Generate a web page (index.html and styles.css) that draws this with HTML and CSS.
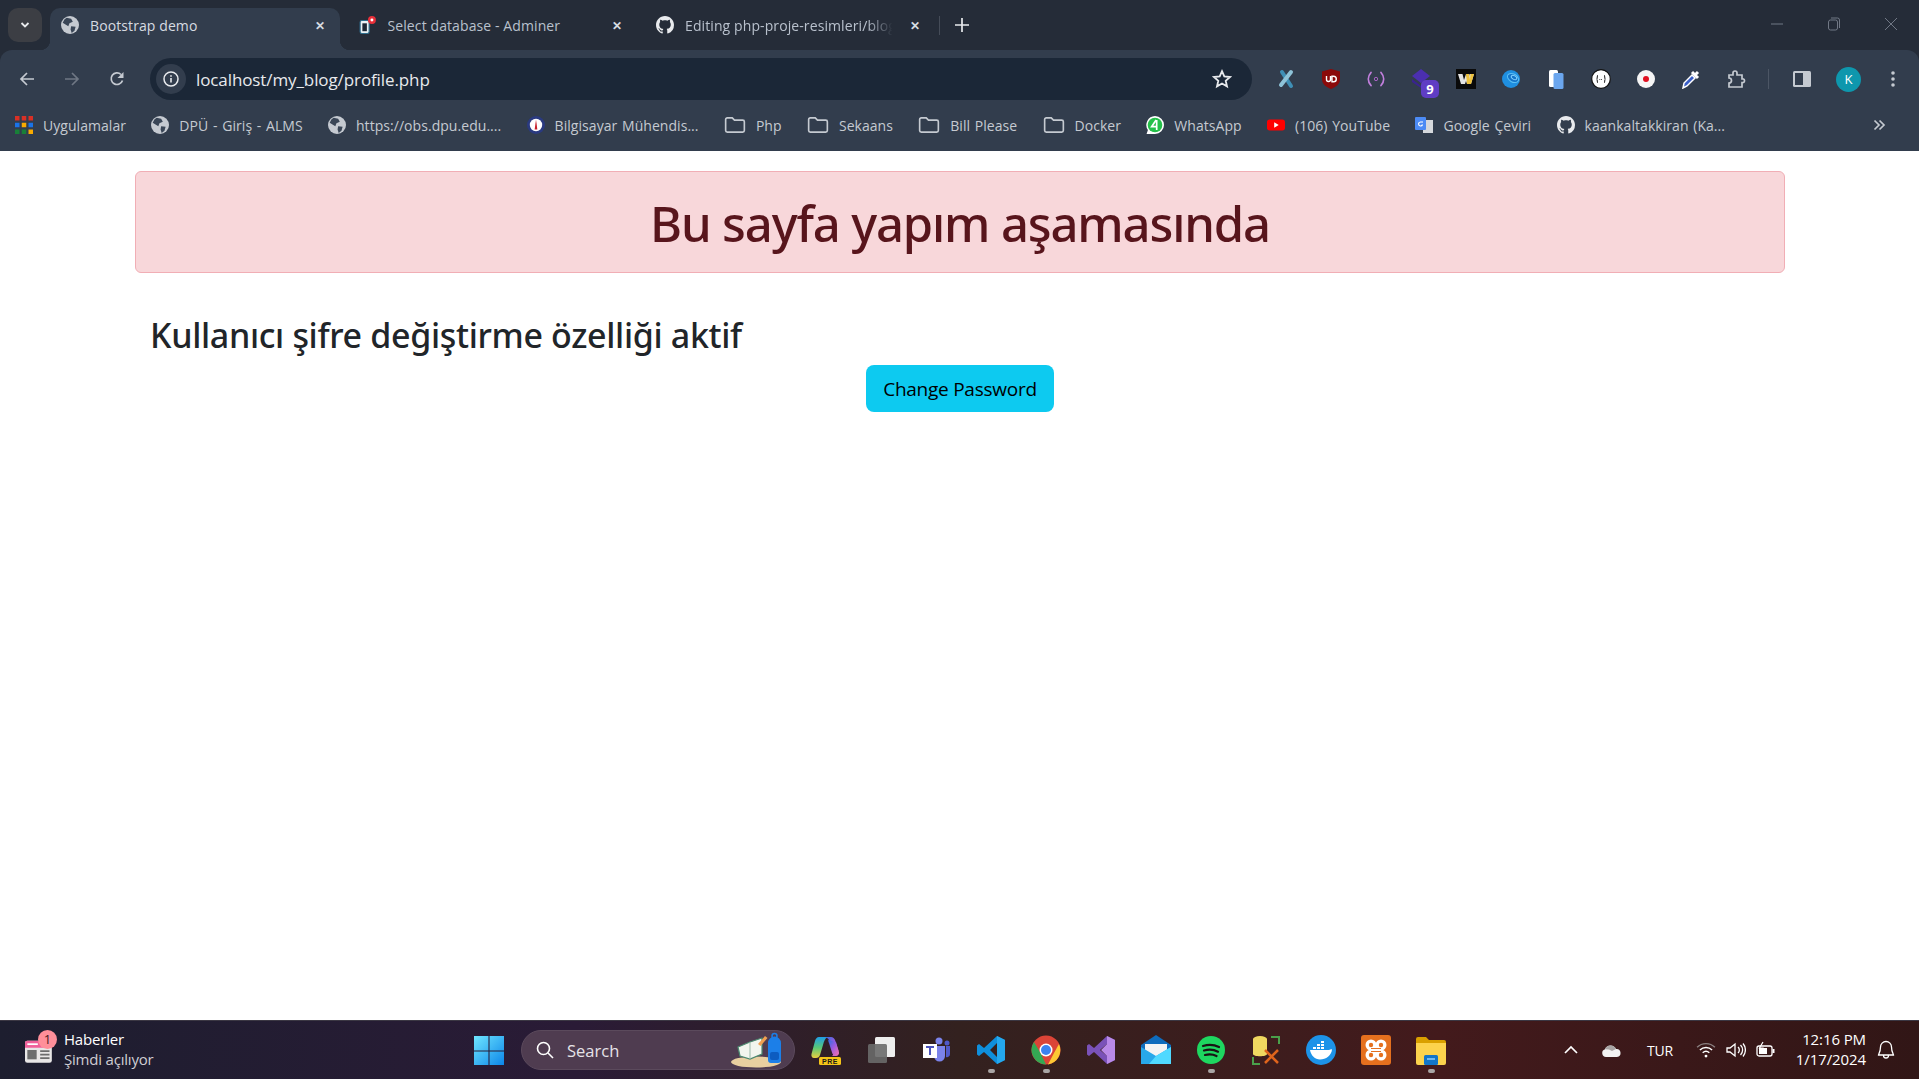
FILE: index.html
```html
<!DOCTYPE html>
<html lang="tr">
<head>
    <meta charset="UTF-8">
    <meta name="viewport" content="width=device-width, initial-scale=1.0">
    <title>Bootstrap demo</title>
    <link rel="stylesheet" href="styles.css">
</head>
<body>

    <svg class="defs">
        <defs>
            <symbol id="globe" viewBox="0 0 16 16">
                <circle cx="8" cy="8" r="8" fill="#c5cad1"/>
                <path d="M5 1.5 9 2.5 10.5 5 7.5 6.5 6.5 9 4 7.5 1.5 6 3 3zM9 9l4 .5L12 13l-2.5 2L8.5 12z" fill="#3a4657"/>
            </symbol>
            <symbol id="folder" viewBox="0 0 20 16">
                <path d="M1.5 3A1.500 1.500 0 0 1 3 1.500h4.500l2 2H17A1.500 1.500 0 0 1 18.500 5v8a1.500 1.500 0 0 1-1.500 1.500H3A1.500 1.500 0 0 1 1.500 13z" fill="none" stroke="#c5cad1" stroke-width="1.500"/>
            </symbol>
            <symbol id="github" viewBox="0 0 16 16">
                <path fill="#e8eaed" d="M8 0C3.580 0 0 3.580 0 8c0 3.540 2.290 6.530 5.470 7.590.4.070.55-.17.55-.38 0-.19-.01-.82-.01-1.490-2.010.37-2.530-.49-2.690-.94-.09-.23-.48-.94-.82-1.130-.28-.15-.68-.52-.01-.53.63-.01 1.080.58 1.230.82.720 1.210 1.870.870 2.330.660.070-.520.280-.870.510-1.070-1.780-.2-3.640-.89-3.640-3.950 0-.870.310-1.590.820-2.150-.080-.2-.360-1.020.080-2.120 0 0 .670-.210 2.200.820.640-.180 1.320-.270 2-.270s1.360.090 2 .270c1.530-1.040 2.200-.820 2.200-.820.440 1.100.160 1.920.080 2.120.510.560.820 1.270.820 2.150 0 3.070-1.870 3.750-3.650 3.950.290.250.540.730.540 1.480 0 1.070-.010 1.930-.010 2.200 0 .210.150.460.550.380A8 8 0 0 0 16 8c0-4.420-3.580-8-8-8z"/>
            </symbol>
        </defs>
    </svg>

    <div class="browser">
        <div class="tabstrip">
            <button class="tab-search">
                <svg width="12" height="12" viewBox="0 0 12 12"><path d="M2.500 4 6 7.500 9.500 4" fill="none" stroke="#e8eaed" stroke-width="1.800"/></svg>
            </button>
            <div class="tab active">
                <svg class="tab-icon"><use href="#globe"/></svg>
                <span class="tab-title">Bootstrap demo</span>
                <span class="tab-close">&#10005;</span>
            </div>
            <div class="tab">
                <svg class="tab-icon" viewBox="0 0 16 16">
                    <rect x="1" y="4" width="8" height="11.500" rx="1.500" fill="#eaf2f5" stroke="#2f6f8f"/>
                    <rect x="3" y="6.500" width="4" height="7" fill="#1d2736"/>
                    <circle cx="11.500" cy="3.500" r="3.500" fill="#e8303a"/>
                    <circle cx="11.500" cy="3.500" r="1.300" fill="#fff"/>
                </svg>
                <span class="tab-title">Select database - Adminer</span>
                <span class="tab-close">&#10005;</span>
            </div>
            <div class="tab last">
                <svg class="tab-icon"><use href="#github"/></svg>
                <span class="tab-title faded">Editing php-proje-resimleri/blog</span>
                <span class="tab-close">&#10005;</span>
            </div>
            <div class="tab-sep"></div>
            <svg class="new-tab" viewBox="0 0 14 14"><path d="M7 0v14M0 7h14" stroke="#e8eaed" stroke-width="1.700"/></svg>
            <div class="window-btns">
                <svg viewBox="0 0 14 14"><path d="M1 7h12" stroke="#717885"/></svg>
                <svg viewBox="0 0 14 14"><rect x="1.500" y="3" width="9" height="10" rx="2" fill="none" stroke="#717885"/><path d="M4 1h6.500a2 2 0 0 1 2 2v8" fill="none" stroke="#717885"/></svg>
                <svg viewBox="0 0 14 14"><path d="M1 1l12 12M13 1 1 13" stroke="#717885"/></svg>
            </div>
        </div>

        <div class="toolbar">
            <div class="nav-btns">
                <svg viewBox="0 0 16 16"><path d="M15 8H2M8 2 2 8l6 6" fill="none" stroke="#c5cad1" stroke-width="1.700"/></svg>
                <svg viewBox="0 0 16 16"><path d="M1 8h13M8 2l6 6-6 6" fill="none" stroke="#6f7784" stroke-width="1.700"/></svg>
                <svg viewBox="0 0 16 16"><path d="M13.500 9.500A5.800 5.800 0 1 1 12 3.500" fill="none" stroke="#c5cad1" stroke-width="1.700"/><path d="M14.500 1v6h-6z" fill="#c5cad1"/></svg>
            </div>
            <div class="omnibox">
                <span class="site-info">
                    <svg viewBox="0 0 16 16"><circle cx="8" cy="8" r="7" fill="none" stroke="#e8eaed" stroke-width="1.500"/><path d="M8 7v4.500M8 4.200v1.600" stroke="#e8eaed" stroke-width="1.600"/></svg>
                </span>
                <span class="url">localhost/my_blog/profile.php</span>
                <svg class="star" viewBox="0 0 20 20"><path d="M10 2.200l2.300 5.200 5.700.6-4.300 3.800 1.300 5.600L10 14.500l-5 2.900 1.300-5.600L2 8l5.700-.6z" fill="none" stroke="#e8eaed" stroke-width="1.800"/></svg>
            </div>
            <div class="extensions">
                <svg viewBox="0 0 20 20"><path d="M6 3 15 17" stroke="#3f8fb5" stroke-width="4" stroke-linecap="round"/><path d="M15 3 5 16" stroke="#8ec3d8" stroke-width="4" stroke-linecap="round"/></svg>
                <svg viewBox="0 0 20 20"><path d="M10 0l9 2.500V10c0 5-4 8-9 10C5 18 1 15 1 10V2.500z" fill="#8b0a0a"/><path d="M5.500 7v3.500a2 2 0 0 0 4 0V7M11 7.200v5.600h1.500a2.800 2.800 0 0 0 0-5.600z" fill="none" stroke="#fff" stroke-width="1.400"/></svg>
                <svg viewBox="0 0 20 20"><circle cx="10" cy="10" r="1.700" fill="none" stroke="#a863c4"/><path d="M5 3.500c-3.500 4-3.500 9 0 13M15 3.500c3.500 4 3.500 9 0 13" fill="none" stroke="#c27fdd" stroke-width="1.800" stroke-linecap="round"/></svg>
                <span class="ext-badge-wrap">
                    <svg viewBox="0 0 20 20"><path d="M10 0l9 7-9 7-9-7z" fill="#4b2fb0"/><path d="M1 10l9 7 9-7v3l-9 6-9-6z" fill="#3a2390"/></svg>
                    <span class="ext-badge">9</span>
                </span>
                <svg viewBox="0 0 20 20"><rect width="20" height="20" fill="#0a0a0a"/><path d="M2 5h4.500l1.500 6 2-6 2 6 1.500-6H18l-3 10h-4l-1-3-1 3H5z" fill="#e4e4e4"/><path d="M10 5h3l1 6 .5-6H18l-3 10h-4z" fill="#eec23c"/></svg>
                <svg viewBox="0 0 20 20"><circle cx="10" cy="10" r="9" fill="#1f8fe0"/><ellipse cx="12" cy="9" rx="6" ry="4" fill="#1474c8" stroke="#5cc0f5" transform="rotate(30 12 9)"/><ellipse cx="13" cy="8.500" rx="3" ry="1.800" fill="none" stroke="#7fd0ff" transform="rotate(30 13 8.500)"/></svg>
                <svg viewBox="0 0 20 20"><rect x="3" y="1" width="9" height="17" rx="1.500" fill="#fff"/><rect x="7.500" y="4" width="10" height="16" rx="1.500" fill="#6ba6ee"/></svg>
                <svg viewBox="0 0 20 20"><circle cx="10" cy="10" r="9.300" fill="#fff" stroke="#111" stroke-width="1.200"/><path d="M7 6.500c-1.500 0 0 3.500-1.500 3.500C7 10 5.500 13.500 7 13.500M13 6.500c1.500 0 0 3.500 1.500 3.500-1.500 0 0 3.500-1.500 3.500" fill="none" stroke="#222" stroke-width="1.100"/><path d="M8.300 10.500h3.400" stroke="#555" stroke-dasharray="1 .7"/></svg>
                <svg viewBox="0 0 20 20"><circle cx="10" cy="10" r="9" fill="#f5f5f5"/><circle cx="10" cy="10" r="3" fill="#e01020"/></svg>
                <svg viewBox="0 0 20 20"><path d="M2 19l1-5L11 6l3 3-8 8z" fill="#3a5fc8" stroke="#fff" stroke-width="1.500"/><path d="M11 3l6 6M13 7l4-4" stroke="#fff" stroke-width="3"/></svg>
                <svg viewBox="0 0 20 20"><path d="M3 6h4V4a2 2 0 0 1 4 0v2h5v4h1.500a2 2 0 0 1 0 3.500H16V18H3v-4a2.500 2.500 0 0 0 0-5z" fill="none" stroke="#c5cad1" stroke-width="1.700"/></svg>
                <span class="toolbar-sep"></span>
                <svg class="side-panel" viewBox="0 0 20 20"><rect x="1" y="2" width="18" height="16" rx="1.500" fill="#c5cad1"/><rect x="3" y="4" width="8" height="12" fill="#323d4d"/></svg>
                <span class="avatar">K</span>
                <svg viewBox="0 0 20 20"><circle cx="10" cy="4" r="1.800" fill="#c5cad1"/><circle cx="10" cy="10" r="1.800" fill="#c5cad1"/><circle cx="10" cy="16" r="1.800" fill="#c5cad1"/></svg>
            </div>
        </div>

        <div class="bookmarks">
            <a class="bm">
                <svg viewBox="0 0 16 16">
                    <path d="M0 0h4v4H0z" fill="#d93025"/><path d="M6 0h4v4H6z" fill="#d93025"/><path d="M12 0h4v4h-4z" fill="#d93025"/>
                    <path d="M0 6h4v4H0z" fill="#1a73e8"/><path d="M6 6h4v4H6z" fill="#f9ab00"/><path d="M12 6h4v4h-4z" fill="#1a73e8"/>
                    <path d="M0 12h4v4H0z" fill="#188038"/><path d="M6 12h4v4H6z" fill="#188038"/><path d="M12 12h4v4h-4z" fill="#f9ab00"/>
                </svg>Uygulamalar</a>
            <a class="bm"><svg viewBox="0 0 16 16"><use href="#globe"/></svg>DPÜ - Giriş - ALMS</a>
            <a class="bm"><svg viewBox="0 0 16 16"><use href="#globe"/></svg>https://obs.dpu.edu....</a>
            <a class="bm">
                <svg viewBox="0 0 16 16"><circle cx="8" cy="8" r="8" fill="#2a3a80"/><circle cx="8" cy="8" r="5.500" fill="#fff"/><path d="M8 3 9.200 12H6.800z" fill="#c8202a"/></svg>Bilgisayar Mühendis...</a>
            <a class="bm"><svg class="folder" viewBox="0 0 20 16"><use href="#folder"/></svg>Php</a>
            <a class="bm"><svg class="folder" viewBox="0 0 20 16"><use href="#folder"/></svg>Sekaans</a>
            <a class="bm"><svg class="folder" viewBox="0 0 20 16"><use href="#folder"/></svg>Bill Please</a>
            <a class="bm"><svg class="folder" viewBox="0 0 20 16"><use href="#folder"/></svg>Docker</a>
            <a class="bm">
                <svg viewBox="0 0 16 16"><path d="M8 0a8 8 0 0 1 0 16H0.500l1.200-3.500A8 8 0 0 1 8 0z" fill="#fff"/><circle cx="8" cy="8" r="6.500" fill="#25c04a"/><path d="M9 3.500 5 9.500h5M9.500 3.500v9" fill="none" stroke="#fff" stroke-width="1.500"/></svg>WhatsApp</a>
            <a class="bm">
                <svg viewBox="0 0 20 16"><rect y="2" width="20" height="12" rx="3" fill="#f00"/><path d="M8 5l5 3-5 3z" fill="#fff"/></svg>(106) YouTube</a>
            <a class="bm">
                <svg viewBox="0 0 18 16"><rect x="8" y="3" width="10" height="13" fill="#d5d8dc"/><rect width="11" height="13" rx="1" fill="#4c8bf5"/><path d="M8 5H5.500a2 2 0 1 0 2 2.500" fill="none" stroke="#fff" stroke-width="1.200"/></svg>Google Çeviri</a>
            <a class="bm"><svg viewBox="0 0 16 16"><use href="#github"/></svg>kaankaltakkiran (Ka...</a>
            <svg class="bm-more" viewBox="0 0 14 14"><path d="M2.500 2.500 7 7l-4.500 4.500M7.500 2.500 12 7l-4.500 4.500" fill="none" stroke="#c5cad1" stroke-width="1.700"/></svg>
        </div>
    </div>

    <main class="page">
        <div class="alert">
            <h1>Bu sayfa yapım aşamasında</h1>
        </div>
        <h2>Kullanıcı şifre değiştirme özelliği aktif</h2>
        <div class="actions">
            <button class="btn-info">Change Password</button>
        </div>
    </main>

    <footer class="taskbar">
        <div class="news">
            <span class="news-icon">
                <svg viewBox="0 0 24 22"><rect y="3" width="23" height="19" rx="2" fill="#e8e6e6"/><path d="M0 5a2 2 0 0 1 2-2h19a2 2 0 0 1 2 2v4H0z" fill="#f0609a"/><path d="M2 6h9" stroke="#fff" stroke-width="1.500"/><rect x="2" y="11" width="8" height="8" fill="#6d6d6d"/><path d="M13 12h8M13 15h8M13 18h8" stroke="#6d6d6d" stroke-width="1.500"/></svg>
                <span class="news-count">1</span>
            </span>
            <div class="news-text">
                <span class="news-title">Haberler</span>
                <span class="news-sub">Şimdi açılıyor</span>
            </div>
        </div>

        <div class="task-center">
            <svg class="task-icon win" viewBox="0 0 28 28"><defs><linearGradient id="wing" x1="0" y1="0" x2="1" y2="1"><stop offset="0" stop-color="#6fe6ff"/><stop offset="1" stop-color="#0a84e8"/></linearGradient></defs><path d="M0 1h13.500v13.500H0zM14.500 1H28v13.500H14.500zM0 15.500h13.500V29H0zM14.500 15.500H28V29H14.500z" fill="url(#wing)"/></svg>
            <div class="search-box">
                <svg viewBox="0 0 18 18"><circle cx="7.500" cy="7.500" r="6" fill="none" stroke="#fff" stroke-width="1.600"/><path d="M12 12l5 5" stroke="#fff" stroke-width="1.600"/></svg>
                <span>Search</span>
                <svg class="search-art" viewBox="0 0 58 36">
                    <ellipse cx="26" cy="30" rx="25" ry="5.500" fill="#e8cfa0"/>
                    <path d="M8 15 20 10l12-4v16l-12 5-10-3z" fill="#f2f5ee" stroke="#4c8a70" stroke-width="1.200"/>
                    <path d="M20 10v17" stroke="#9ab8a8"/>
                    <path d="M28 12l7-8 2.500 2-7 8z" fill="#f0a050"/>
                    <path d="M38 28V11a6.500 6.500 0 0 1 13 0v17a3 3 0 0 1-3 3h-7a3 3 0 0 1-3-3z" fill="#1c7fe8"/>
                    <circle cx="44.500" cy="4" r="2.500" fill="none" stroke="#1c7fe8" stroke-width="1.500"/>
                    <rect x="40" y="20" width="9" height="8" rx="2" fill="#0d5cc0"/>
                </svg>
            </div>
            <span class="task-item">
                <svg class="task-icon" viewBox="0 0 30 30"><defs><linearGradient id="cop" x1="0" y1="0" x2="0" y2="1"><stop offset="0" stop-color="#1f9fe8"/><stop offset=".5" stop-color="#58c878"/><stop offset="1" stop-color="#e8d040"/></linearGradient><linearGradient id="cop2" x1="0" y1="0" x2="1" y2="1"><stop offset="0" stop-color="#2a6fe0"/><stop offset=".5" stop-color="#9a5ae0"/><stop offset="1" stop-color="#f070b0"/></linearGradient></defs><path d="M8 2h9c-3 1-4 4-5 8l-3 10c-.5 2-2 3-4 3H3c-2 0-3-2-2.500-4L4 6c.5-2 2-4 4-4z" fill="url(#cop)"/><path d="M13 2h7c2 0 3.500 1.500 4 3l4 12c.5 2-1 4-3 4h-4c2-1 1-5 0-8l-3-8c-1-2-3-3-5-3z" fill="url(#cop2)"/><path d="M17 5l8 2 2.500 9-6 3z" fill="url(#cop2)"/><rect x="8" y="22" width="22" height="8" rx="1.500" fill="#f5c518"/><text x="19" y="28.500" class="pre-label">PRE</text></svg>
            </span>
            <span class="task-item">
                <svg class="task-icon" viewBox="0 0 30 30"><rect x="9" y="2" width="20" height="20" rx="1.500" fill="#eee"/><rect x="2" y="9" width="19" height="19" rx="1.500" fill="#6a6a6a" opacity=".9"/></svg>
            </span>
            <span class="task-item">
                <svg class="task-icon" viewBox="0 0 30 30"><circle cx="18" cy="6" r="3.500" fill="#7b83eb"/><circle cx="26" cy="8" r="2.500" fill="#5059c9"/><path d="M13 11h11v10a5.500 5.500 0 0 1-11 0z" fill="#7b83eb"/><path d="M25 11h4v8a3 3 0 0 1-4 3z" fill="#5059c9"/><rect x="2" y="9" width="14" height="14" fill="#fff"/><path d="M5 12h8M9 12v8" stroke="#4b53bc" stroke-width="2"/></svg>
            </span>
            <span class="task-item running">
                <svg class="task-icon" viewBox="0 0 30 30"><path d="M21 1l8 4v20l-8 4L8 17l-5 4-2-1.500v-9L3 9l5 4zM21 8l-7 7 7 7z" fill="#0f8fdc"/><path d="M21 1l8 4v20l-8 4z" fill="#24a8ee"/></svg>
            </span>
            <span class="task-item running">
                <svg class="task-icon" viewBox="0 0 30 30"><circle cx="15" cy="15" r="14.500" fill="#db4437"/><path d="M28 9a14.500 14.500 0 0 1-11 20.400L23 18z" fill="#fcc934"/><path d="M15 29.500A14.500 14.500 0 0 1 3 7l6.500 11z" fill="#34a853"/><circle cx="15" cy="15" r="6.500" fill="#fff"/><circle cx="15" cy="15" r="5" fill="#3c82f0"/></svg>
            </span>
            <span class="task-item">
                <svg class="task-icon" viewBox="0 0 30 30"><path d="M21 1l8 4v20l-8 4L8 17l-5 4-2-1.500v-9L3 9l5 4zM21 9l-7 6 7 6z" fill="#7a52b8"/><path d="M21 1l8 4v20l-8 4zm0 8v12l-6-6z" fill="#b98ae8" fill-rule="evenodd"/></svg>
            </span>
            <span class="task-item">
                <svg class="task-icon" viewBox="0 0 30 30"><path d="M0 10 15 0l15 10v18H0z" fill="#0f6cbd"/><path d="M4 9h22v8l-11 6-11-6z" fill="#f4f4f4"/><path d="M0 12l15 9 15-9v17H0z" fill="#28a8ea"/><path d="M15 21l15-9v17H8z" fill="#50d9ff"/></svg>
            </span>
            <span class="task-item running">
                <svg class="task-icon" viewBox="0 0 30 30"><circle cx="15" cy="15" r="14" fill="#1ed760"/><path d="M7 11c6-2 11-1.500 16 1M8 15.500c5-1.500 10-1 14 1.200M9 20c4-1 8-.8 11.500 1" fill="none" stroke="#191414" stroke-width="2.200" stroke-linecap="round"/></svg>
            </span>
            <span class="task-item">
                <svg class="task-icon" viewBox="0 0 30 30"><path d="M2 4a7 3 0 0 1 14 0v15c0 3-14 3-14 0z" fill="#f0d860"/><path d="M20 2h8v7M2 22v7h7" fill="none" stroke="#4aa04a" stroke-width="2"/><path d="M14 15l13 13M27 15 14 28" stroke="#e0641c" stroke-width="2.500"/></svg>
            </span>
            <span class="task-item">
                <svg class="task-icon" viewBox="0 0 30 30"><circle cx="15" cy="15" r="15" fill="#1d93e8"/><path d="M4 15h19c1 0 2-1 3-.5-.5 6-6 10-12 10-5 0-9-4-10-9.500z" fill="#fff"/><path d="M7 12h3v2H7zM11 12h3v2h-3zM15 12h3v2h-3zM11 9h3v2h-3zM15 9h3v2h-3zM15 6h3v2h-3z" fill="#fff"/></svg>
            </span>
            <span class="task-item">
                <svg class="task-icon" viewBox="0 0 30 30"><rect width="30" height="30" rx="3" fill="#e5701e"/><circle cx="10" cy="10" r="5.500" fill="#fff"/><circle cx="20" cy="10" r="5.500" fill="#fff"/><circle cx="10" cy="20" r="5.500" fill="#fff"/><circle cx="20" cy="20" r="5.500" fill="#fff"/><rect x="9" y="10" width="12" height="10" fill="#fff"/><circle cx="10" cy="10" r="2.200" fill="#e5701e"/><circle cx="20" cy="10" r="2.200" fill="#e5701e"/><circle cx="10" cy="20" r="2.200" fill="#e5701e"/><circle cx="20" cy="20" r="2.200" fill="#e5701e"/><path d="M10 13.500h10M10 16.500h10" stroke="#e5701e" stroke-width="1.200"/></svg>
            </span>
            <span class="task-item running">
                <svg class="task-icon" viewBox="0 0 30 30"><path d="M0 4a2 2 0 0 1 2-2h8l3 3h15a2 2 0 0 1 2 2v3H0z" fill="#d9a000"/><path d="M0 8h30v20a2 2 0 0 1-2 2H2a2 2 0 0 1-2-2z" fill="#fcd34d"/><rect x="8" y="20" width="14" height="10" rx="1.500" fill="#1275c8"/><path d="M11 24h8" stroke="#8fd0ff" stroke-width="1.500"/></svg>
            </span>
        </div>

        <div class="tray">
            <svg class="tray-icon" viewBox="0 0 16 16"><path d="M2 11l6-6 6 6" fill="none" stroke="#fff" stroke-width="1.700"/></svg>
            <svg class="tray-cloud" viewBox="0 0 22 14"><path d="M6 14a4 4 0 0 1-1-7.800A6 6 0 0 1 16 6a4 4 0 0 1 1 8z" fill="#f2f2f2"/><path d="M5 6.200A6 6 0 0 1 16 6l-4 2-3-1.500z" fill="#a8a4a4"/></svg>
            <span class="tray-lang">TUR</span>
            <div class="tray-group">
                <svg viewBox="0 0 18 16"><path d="M1 5.500a11.500 11.500 0 0 1 16 0" fill="none" stroke="#8a8080" stroke-width="1.300"/><path d="M3.500 8a8 8 0 0 1 11 0M6 10.500a4.500 4.500 0 0 1 6 0" fill="none" stroke="#fff" stroke-width="1.300"/><circle cx="9" cy="13.500" r="1.300" fill="#fff"/></svg>
                <svg viewBox="0 0 20 16"><path d="M1 6h3l5-4v12l-5-4H1z" fill="none" stroke="#fff" stroke-width="1.300"/><path d="M12 5a4 4 0 0 1 0 6M14.500 3a7 7 0 0 1 0 10M17 1.500a10 10 0 0 1 0 13" fill="none" stroke="#fff" stroke-width="1.300"/></svg>
                <svg viewBox="0 0 20 16"><rect x="1" y="4" width="15" height="10" rx="2" fill="none" stroke="#fff" stroke-width="1.300"/><rect x="3" y="6" width="8" height="6" fill="#fff"/><path d="M17.500 7v4" stroke="#fff" stroke-width="2"/><path d="M7 0 3.500 6H7l-1 4" fill="none" stroke="#fff" stroke-width="1.200"/></svg>
            </div>
            <div class="clock">
                <span>12:16 PM</span>
                <span>1/17/2024</span>
            </div>
            <svg class="tray-bell" viewBox="0 0 18 20"><path d="M9 1.500a5.500 5.500 0 0 0-5.500 5.500c0 5-2 7-2 8h15c0-1-2-3-2-8A5.500 5.500 0 0 0 9 1.500zM6.500 15.500a2.500 2.500 0 0 0 5 0" fill="none" stroke="#fff" stroke-width="1.300"/></svg>
        </div>
    </footer>

</body>
</html>
```

FILE: styles.css
```css
* {
    box-sizing: border-box;
}
html, body {
    height: 100%;
}
body {
    margin: 0;
    display: flex;
    flex-direction: column;
    height: 1079px;
    overflow: hidden;
    background-color: #fff;
    font-family: "Open Sans", "Noto Sans", sans-serif;
    color: #212529;
}
.defs {
    display: none;
}

/* browser chrome */
.browser {
    flex: none;
    background-color: #252c38;
}
.tabstrip {
    display: flex;
    align-items: flex-end;
    height: 50px;
    padding-left: 8px;
}
.tab-search {
    flex: none;
    display: flex;
    align-items: center;
    justify-content: center;
    width: 34px;
    height: 34px;
    margin: 0 8px 8px 0;
    padding: 0;
    border: none;
    border-radius: 10px;
    background-color: #3c3e44;
}
.tab {
    flex: none;
    position: relative;
    display: flex;
    align-items: center;
    width: 290px;
    height: 42px;
    margin-right: 7.5px;
    padding: 0 12px 8px 11px;
    font-size: 14px;
    letter-spacing: 0.1px;
    color: #b9c1cd;
    border-radius: 10px 10px 0 0;
}
.tab.active {
    color: #d7dbe1;
    background-color: #323d4d;
}
.tab.active::before,
.tab.active::after {
    content: "";
    position: absolute;
    bottom: 0;
    width: 10px;
    height: 10px;
}
.tab.active::before {
    left: -10px;
    background: radial-gradient(circle at 0 0, transparent 10px, #323d4d 10.5px);
}
.tab.active::after {
    right: -10px;
    background: radial-gradient(circle at 100% 0, transparent 10px, #323d4d 10.5px);
}
.tab.last {
    margin-right: 0;
}
.tab-icon {
    flex: none;
    width: 18px;
    height: 18px;
    margin-right: 11px;
}
.tab-title {
    flex: 1;
    overflow: hidden;
    white-space: nowrap;
}
.faded {
    -webkit-mask-image: linear-gradient(to right, #000 85%, transparent 97%);
    mask-image: linear-gradient(to right, #000 85%, transparent 97%);
}
.tab-close {
    flex: none;
    width: 16px;
    margin-left: 8px;
    font-size: 12px;
    font-weight: 700;
    text-align: center;
    color: #d7dbe1;
}
.tab-sep {
    flex: none;
    width: 1px;
    height: 19px;
    margin: 0 15px 15px 4px;
    background-color: #454c58;
}
.new-tab {
    flex: none;
    width: 14px;
    height: 14px;
    margin-bottom: 18px;
}
.window-btns {
    display: flex;
    gap: 43px;
    margin-left: auto;
    margin-right: 21px;
    align-self: flex-start;
    padding-top: 17px;
}
.window-btns svg {
    width: 14px;
    height: 14px;
}

.toolbar {
    display: flex;
    align-items: center;
    height: 58px;
    padding: 0 9px 0 0;
    background-color: #323d4d;
    border-radius: 12px 12px 0 0;
}
.nav-btns {
    display: flex;
    gap: 29px;
    padding-left: 19px;
    width: 150px;
}
.nav-btns svg {
    width: 16px;
    height: 16px;
}
.omnibox {
    display: flex;
    align-items: center;
    width: 1102px;
    height: 42px;
    padding: 0 20px 0 6px;
    background-color: #1b2737;
    border-radius: 21px;
}
.site-info {
    display: flex;
    align-items: center;
    justify-content: center;
    width: 30px;
    height: 30px;
    border-radius: 50%;
    background-color: #323d4d;
}
.site-info svg {
    width: 16px;
    height: 16px;
}
.url {
    flex: 1;
    margin-left: 10px;
    font-size: 17px;
    letter-spacing: -0.1px;
    color: #e8eaed;
}
.star {
    width: 20px;
    height: 20px;
}
.extensions {
    display: flex;
    align-items: center;
    gap: 25px;
    margin-left: 24px;
}
.extensions svg {
    flex: none;
    width: 20px;
    height: 20px;
}
.ext-badge-wrap {
    position: relative;
    display: block;
    width: 20px;
    height: 20px;
}
.ext-badge {
    position: absolute;
    right: -8px;
    bottom: -9px;
    width: 18px;
    height: 18px;
    border-radius: 5px;
    font-size: 13px;
    font-weight: 700;
    line-height: 18px;
    text-align: center;
    color: #fff;
    background-color: #5f3dc4;
}
.toolbar-sep {
    width: 1px;
    height: 20px;
    margin: 0 0 0 -3px;
    background-color: #4c5665;
}
.extensions .side-panel {
    margin-left: -2px;
}
.avatar {
    flex: none;
    width: 25px;
    height: 25px;
    margin: 0 -3px 0 -1px;
    border-radius: 50%;
    font-size: 13px;
    line-height: 25px;
    text-align: center;
    color: #fff;
    background-color: #0e97ad;
}

.bookmarks {
    display: flex;
    align-items: center;
    gap: 25.3px;
    height: 43px;
    padding: 0 16px 9px 15px;
    background-color: #323d4d;
}
.bm {
    display: flex;
    align-items: center;
    gap: 10px;
    font-size: 14px;
    letter-spacing: 0.05px;
    word-spacing: 1px;
    white-space: nowrap;
    color: #c5cad1;
}
.bm svg {
    flex: none;
    width: 18px;
    height: 18px;
}
.bm .folder {
    width: 22px;
}
.bm-more {
    width: 14px;
    height: 14px;
    margin-left: auto;
    margin-right: 17px;
}

/* page content */
.page {
    flex: 1;
    padding: 20px 134px 0 135px;
}
.alert {
    height: 102px;
    border: 1px solid #f1aeb5;
    border-radius: 6px;
    background-color: #f8d7da;
    text-align: center;
}
.alert h1 {
    margin: 0;
    font-family: "Noto Sans", "Open Sans", sans-serif;
    font-size: 49px;
    font-weight: 500;
    letter-spacing: -1.15px;
    line-height: 102px;
    color: #58151c;
}
.page h2 {
    margin: 38px 0 0 15px;
    font-family: "Noto Sans", "Open Sans", sans-serif;
    font-size: 34px;
    font-weight: 500;
    letter-spacing: -0.34px;
    line-height: 48px;
}
.actions {
    display: flex;
    justify-content: center;
    margin-top: 6px;
}
.btn-info {
    width: 188px;
    height: 47px;
    padding: 0;
    border: none;
    border-radius: 8px;
    font-family: inherit;
    font-size: 19px;
    letter-spacing: -0.25px;
    color: #000;
    background-color: #0dcaf0;
}

/* windows taskbar */
.taskbar {
    flex: none;
    position: relative;
    display: flex;
    align-items: center;
    height: 59px;
    padding: 0 24px 0 25px;
    color: #fff;
    background: linear-gradient(to right, #1d1e2f 0%, #2a1b36 30%, #33211f 50%, #431a1c 75%, #311616 100%);
    border-top: 1px solid #3b3743;
}
.news {
    display: flex;
    align-items: center;
    gap: 11px;
    width: 440px;
}
.news-icon {
    position: relative;
    display: block;
    width: 28px;
    height: 26px;
}
.news-icon svg {
    width: 28px;
    height: 26px;
}
.news-count {
    position: absolute;
    top: -7px;
    right: -4px;
    width: 19px;
    height: 19px;
    border-radius: 50%;
    font-size: 13px;
    line-height: 19px;
    text-align: center;
    color: #4a1a20;
    background-color: #ff8f9a;
}
.news-text {
    display: flex;
    flex-direction: column;
    padding-bottom: 3px;
    font-size: 15px;
    line-height: 20px;
    letter-spacing: -0.2px;
}
.news-sub {
    color: #cfcdd3;
}
.task-center {
    display: flex;
    align-items: center;
    gap: 25px;
    padding-left: 9px;
}
.task-icon {
    display: block;
    flex: none;
    width: 30px;
    height: 30px;
}
.win {
    margin-right: -9px;
}
.search-box {
    display: flex;
    align-items: center;
    width: 274px;
    height: 40px;
    margin-right: -9px;
    margin-left: 1px;
    padding: 0 0 0 14px;
    border-radius: 20px;
    font-size: 16.5px;
    color: #e6e3e8;
    background-color: #4f3c50;
    border: 1px solid #5b4a5c;
}
.search-box svg {
    flex: none;
    width: 18px;
    height: 18px;
}
.search-box span {
    flex: 1;
    margin-left: 13px;
}
.search-box .search-art {
    width: 58px;
    height: 36px;
    margin-right: 6px;
}
.task-item {
    position: relative;
    display: block;
}
.task-item.running::after {
    content: "";
    position: absolute;
    left: 12px;
    bottom: -8px;
    width: 7px;
    height: 4px;
    border-radius: 2px;
    background-color: #a9a5a5;
}
.pre-label {
    font-family: "Liberation Sans", sans-serif;
    font-size: 7px;
    font-weight: 700;
    letter-spacing: 0.5px;
    text-anchor: middle;
    fill: #1a1a1a;
}
.tray {
    display: flex;
    align-items: center;
    margin-left: auto;
}
.tray-icon {
    width: 16px;
    height: 16px;
}
.tray-cloud {
    width: 22px;
    height: 14px;
    margin-left: 21px;
}
.tray-lang {
    margin-left: 25px;
    font-size: 14px;
    letter-spacing: -0.2px;
}
.tray-group {
    display: flex;
    align-items: center;
    gap: 10px;
    margin-left: 23px;
}
.tray-group svg {
    width: 20px;
    height: 18px;
}
.clock {
    display: flex;
    flex-direction: column;
    align-items: flex-end;
    width: 90px;
    padding-bottom: 3px;
    font-size: 15px;
    line-height: 20px;
    letter-spacing: -0.1px;
}
.tray-bell {
    width: 18px;
    height: 20px;
    margin-left: 11px;
}
```
